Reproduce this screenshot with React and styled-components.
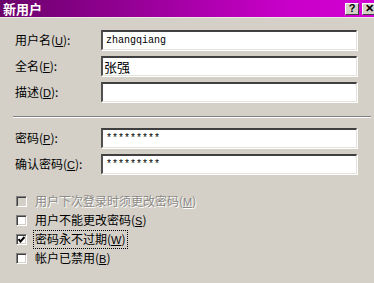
import React from 'react';
import styled, { createGlobalStyle, css } from 'styled-components';

const GlobalStyle = createGlobalStyle`
  html, body {
    margin: 0;
    padding: 0;
    overflow: hidden;
    background: #d4d0c8;
  }
`;

const Dialog = styled.div`
  width: 380px;
  height: 283px;
  background: #d4d0c8;
  font-family: "Noto Sans CJK SC", "Liberation Sans", sans-serif;
  font-size: 12px;
  color: #000;
`;

const TitleBar = styled.div`
  display: flex;
  align-items: center;
  height: 17px;
  padding: 0 4px 0 3px;
  background: linear-gradient(to right, #6a006a 0%, #9c009c 40%, #c800c8 75%, #d400d4 100%);
  border-bottom: 1px solid #ece9e4;
`;

const Title = styled.span`
  flex: 1;
  color: #fff;
  font-weight: 700;
  font-size: 13px;
  line-height: 17px;
`;

const TitleButtons = styled.div`
  display: flex;
  gap: 3px;
`;

const TitleButton = styled.span`
  display: flex;
  align-items: center;
  justify-content: center;
  width: 14px;
  height: 12px;
  box-sizing: border-box;
  background: #d4d0c8;
  border-top: 1px solid #fff;
  border-left: 1px solid #fff;
  border-right: 1px solid #404040;
  border-bottom: 1px solid #404040;
  font-family: "Liberation Sans", sans-serif;
  font-weight: 700;
  font-size: 11px;
  line-height: 1;
`;

const Body = styled.div`
  padding: 12px 17px 0 15px;
  width: 342px;
`;

const Group = styled.div`
  display: flex;
  flex-direction: column;
  gap: ${({ $gap }) => $gap}px;
`;

const Row = styled.div`
  display: flex;
  align-items: center;
  height: 20px;
`;

const Label = styled.label`
  width: 86px;
  white-space: nowrap;
  line-height: 20px;

  u {
    font-family: "Liberation Sans", sans-serif;
    font-size: 11px;
  }
`;

const Field = styled.input`
  width: 256px;
  height: 20px;
  box-sizing: border-box;
  margin: 0;
  padding: 0 3px;
  background: #fff;
  border-top: 2px solid #404040;
  border-left: 2px solid #505050;
  border-right: 1px solid #e4e2dc;
  border-bottom: 1px solid #e4e2dc;
  box-shadow: 1px 1px 0 #fff;
  outline: none;
  color: #000;
  font-family: "Liberation Mono", "Noto Sans CJK SC", monospace;
  font-size: 10px;

  ${({ $cjk }) =>
    $cjk &&
    css`
      padding-left: 1px;
      font-family: "Noto Sans CJK SC", sans-serif;
      font-size: 13px;
    `}
`;

const Separator = styled.hr`
  margin: 14px -14px 10px -2px;
  height: 0;
  border: none;
  border-top: 1px solid #808080;
  border-bottom: 1px solid #fff;
`;

const Checks = styled.div`
  display: flex;
  flex-direction: column;
  margin-top: 18px;
  padding-left: 1px;
`;

const CheckRow = styled.div`
  display: flex;
  align-items: center;
  gap: 6px;
  height: 19px;
  color: ${({ $disabled }) => ($disabled ? '#8c8a86' : '#000')};
  text-shadow: ${({ $disabled }) => ($disabled ? '1px 1px 0 #fff' : 'none')};

  u {
    font-family: "Liberation Sans", sans-serif;
    font-size: 11px;
  }
`;

const Box = styled.span`
  display: flex;
  align-items: center;
  justify-content: center;
  width: 11px;
  height: 11px;
  box-sizing: border-box;
  background: ${({ $disabled }) => ($disabled ? '#d4d0c8' : '#fff')};
  border-top: 1px solid #808080;
  border-left: 1px solid #808080;
  border-right: 1px solid #fff;
  border-bottom: 1px solid #fff;
  box-shadow: inset 1px 1px 0 #404040, inset -1px -1px 0 #d4d0c8;
`;

const CheckText = styled.span`
  line-height: 15px;
  padding: 0 1px;
  border: 1px dotted ${({ $focus }) => ($focus ? '#000' : 'transparent')};
`;

const Check = ({ checked, disabled, focus, children }) => (
  <CheckRow $disabled={disabled}>
    <Box $disabled={disabled}>
      {checked && (
        <svg width="7" height="7" viewBox="0 0 7 7">
          <path d="M0.5 3 L2.5 5.5 L6.5 1" stroke="#000" strokeWidth="2" fill="none" />
        </svg>
      )}
    </Box>
    <CheckText $focus={focus}>{children}</CheckText>
  </CheckRow>
);

const App = () => (
  <Dialog>
    <GlobalStyle />
    <TitleBar>
      <Title>新用户</Title>
      <TitleButtons>
        <TitleButton>?</TitleButton>
        <TitleButton>✕</TitleButton>
      </TitleButtons>
    </TitleBar>
    <Body>
      <Group $gap={6}>
        <Row>
          <Label>用户名(<u>U</u>):</Label>
          <Field readOnly value="zhangqiang" />
        </Row>
        <Row>
          <Label>全名(<u>F</u>):</Label>
          <Field readOnly value="张强" $cjk />
        </Row>
        <Row>
          <Label>描述(<u>D</u>):</Label>
          <Field readOnly value="" />
        </Row>
      </Group>
      <Separator />
      <Group $gap={6}>
        <Row>
          <Label>密码(<u>P</u>):</Label>
          <Field readOnly value="*********" />
        </Row>
        <Row>
          <Label>确认密码(<u>C</u>):</Label>
          <Field readOnly value="*********" />
        </Row>
      </Group>
      <Checks>
        <Check disabled>
          用户下次登录时须更改密码(<u>M</u>)
        </Check>
        <Check>
          用户不能更改密码(<u>S</u>)
        </Check>
        <Check checked focus>
          密码永不过期(<u>W</u>)
        </Check>
        <Check>
          帐户已禁用(<u>B</u>)
        </Check>
      </Checks>
    </Body>
  </Dialog>
);

export default App;
